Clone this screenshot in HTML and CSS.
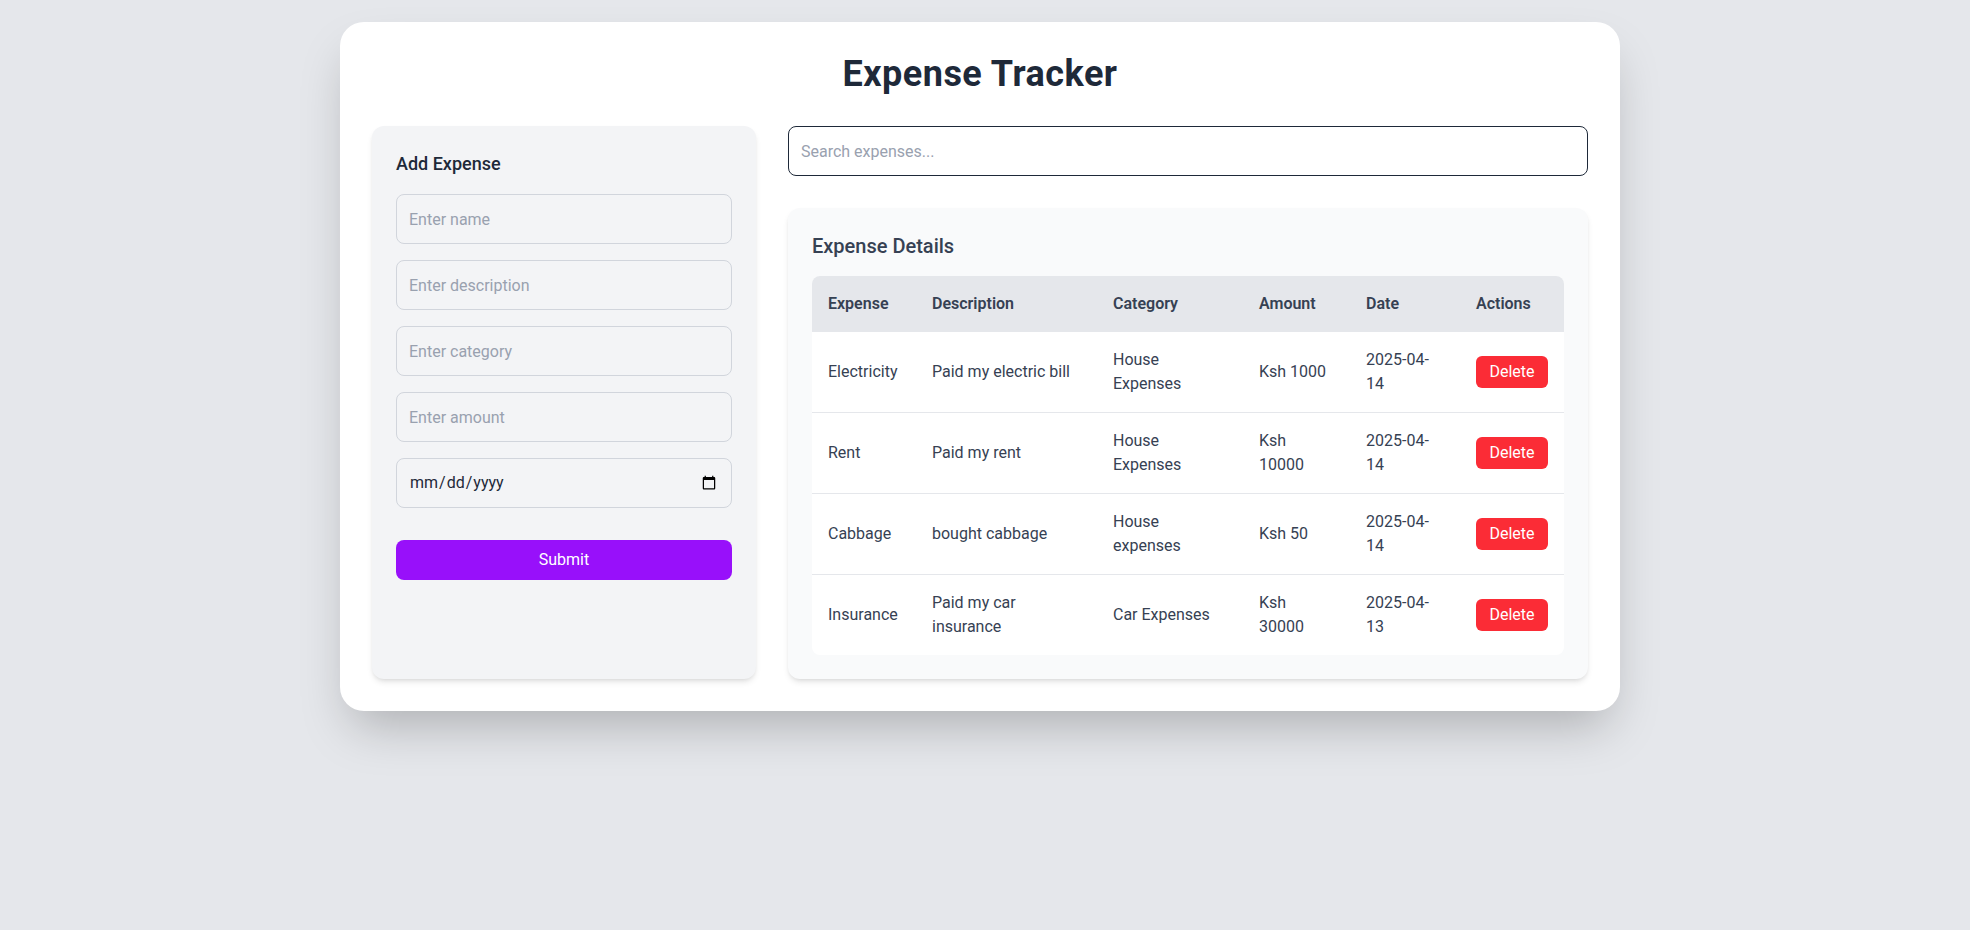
FILE: index.html
```html
<!DOCTYPE html>
<html lang="en">
<head>
<meta charset="utf-8">
<title>Expense Tracker</title>
<link rel="stylesheet" href="styles.css">
</head>
<body>
<div class="page">
  <main class="app">
    <h1 class="app-title">Expense Tracker</h1>
    <div class="layout">
      <section class="panel form-panel">
        <h2 class="panel-title">Add Expense</h2>
        <form class="expense-form">
          <input class="field" type="text" placeholder="Enter name">
          <input class="field" type="text" placeholder="Enter description">
          <input class="field" type="text" placeholder="Enter category">
          <input class="field" type="text" placeholder="Enter amount">
          <input class="field field-date" type="date">
          <button class="btn-submit" type="button">Submit</button>
        </form>
      </section>
      <section class="main-col">
        <input class="search" type="text" placeholder="Search expenses...">
        <div class="details-card">
          <h2 class="details-title">Expense Details</h2>
          <table class="expense-table">
            <thead>
              <tr>
                <th class="c-exp">Expense</th>
                <th class="c-desc">Description</th>
                <th class="c-cat">Category</th>
                <th class="c-amt">Amount</th>
                <th class="c-date">Date</th>
                <th class="c-act">Actions</th>
              </tr>
            </thead>
            <tbody>
              <tr>
                <td>Electricity</td>
                <td>Paid my electric bill</td>
                <td>House Expenses</td>
                <td>Ksh 1000</td>
                <td>2025-04-14</td>
                <td><button class="btn-delete" type="button">Delete</button></td>
              </tr>
              <tr>
                <td>Rent</td>
                <td>Paid my rent</td>
                <td>House Expenses</td>
                <td>Ksh 10000</td>
                <td>2025-04-14</td>
                <td><button class="btn-delete" type="button">Delete</button></td>
              </tr>
              <tr>
                <td>Cabbage</td>
                <td>bought cabbage</td>
                <td>House expenses</td>
                <td>Ksh 50</td>
                <td>2025-04-14</td>
                <td><button class="btn-delete" type="button">Delete</button></td>
              </tr>
              <tr>
                <td>Insurance</td>
                <td>Paid my car insurance</td>
                <td>Car Expenses</td>
                <td>Ksh 30000</td>
                <td>2025-04-13</td>
                <td><button class="btn-delete" type="button">Delete</button></td>
              </tr>
            </tbody>
          </table>
        </div>
      </section>
    </div>
  </main>
</div>
</body>
</html>
```

FILE: styles.css
```css
* {
  box-sizing: border-box;
}

html, body {
  margin: 0;
  padding: 0;
}

body {
  background: #e5e7eb;
  font-family: Roboto, "Liberation Sans", sans-serif;
  color: #364153;
  min-height: 930px;
}

.page {
  padding: 22px 10px 0 0;
}

.app {
  width: 1280px;
  margin: 0 auto;
  background: #ffffff;
  border-radius: 24px;
  padding: 32px;
  box-shadow: 0 25px 50px -12px rgba(0, 0, 0, 0.25);
}

.app-title {
  margin: 0 0 32px;
  font-size: 36px;
  line-height: 40px;
  font-weight: 700;
  letter-spacing: 0.5px;
  text-align: center;
  color: #1e2939;
}

.layout {
  display: grid;
  grid-template-columns: repeat(3, 1fr);
  gap: 32px;
}

.panel {
  background: #f3f4f6;
  border-radius: 12px;
  padding: 24px;
  box-shadow: 0 4px 6px -1px rgba(0, 0, 0, 0.1), 0 2px 4px -2px rgba(0, 0, 0, 0.1);
}

.panel-title {
  margin: 0 0 16px;
  font-size: 18px;
  line-height: 28px;
  font-weight: 500;
  color: #1e2939;
}

.expense-form {
  display: flex;
  flex-direction: column;
  gap: 16px;
}

.field {
  display: block;
  width: 100%;
  height: 50px;
  padding: 12px;
  border: 1px solid #d1d5dc;
  border-radius: 8px;
  background: transparent;
  font-family: inherit;
  font-size: 16px;
  line-height: 24px;
  color: #1e2939;
  outline: none;
}

.field::placeholder,
.search::placeholder {
  color: #99a1af;
}

.field-date {
  color: #1e2939;
}

.btn-submit {
  margin-top: 16px;
  height: 40px;
  width: 100%;
  border: 0;
  border-radius: 8px;
  background: #9810fa;
  color: #ffffff;
  font-family: inherit;
  font-size: 16px;
  line-height: 24px;
  cursor: pointer;
}

.main-col {
  grid-column: span 2;
  display: flex;
  flex-direction: column;
}

.search {
  display: block;
  width: 100%;
  height: 50px;
  padding: 12px;
  margin-bottom: 32px;
  border: 1px solid #1e2939;
  border-radius: 8px;
  background: #ffffff;
  font-family: inherit;
  font-size: 16px;
  line-height: 24px;
  color: #1e2939;
  outline: none;
}

.details-card {
  background: #f9fafb;
  border-radius: 12px;
  padding: 24px;
  box-shadow: 0 4px 6px -1px rgba(0, 0, 0, 0.1), 0 2px 4px -2px rgba(0, 0, 0, 0.1);
}

.details-title {
  margin: 0 0 16px;
  font-size: 20px;
  line-height: 28px;
  font-weight: 500;
  color: #364153;
}

.expense-table {
  width: 100%;
  table-layout: fixed;
  border-collapse: collapse;
  background: #ffffff;
  border-radius: 8px;
  overflow: hidden;
  font-size: 16px;
  line-height: 24px;
}

.expense-table th {
  background: #e5e7eb;
  text-align: left;
  font-weight: 600;
  padding: 16px;
  color: #364153;
}

.expense-table td {
  padding: 16px;
  vertical-align: middle;
  color: #364153;
}

.expense-table tbody tr + tr td {
  border-top: 1px solid #e5e7eb;
}

.c-exp { width: 104px; }
.c-desc { width: 181px; }
.c-cat { width: 146px; }
.c-amt { width: 107px; }
.c-date { width: 110px; }
.c-act { width: 104px; }

.btn-delete {
  width: 72px;
  height: 32px;
  padding: 4px 0;
  border: 0;
  border-radius: 6px;
  background: #fb2c36;
  color: #ffffff;
  font-family: inherit;
  font-size: 16px;
  line-height: 24px;
  text-align: center;
  cursor: pointer;
}
```
